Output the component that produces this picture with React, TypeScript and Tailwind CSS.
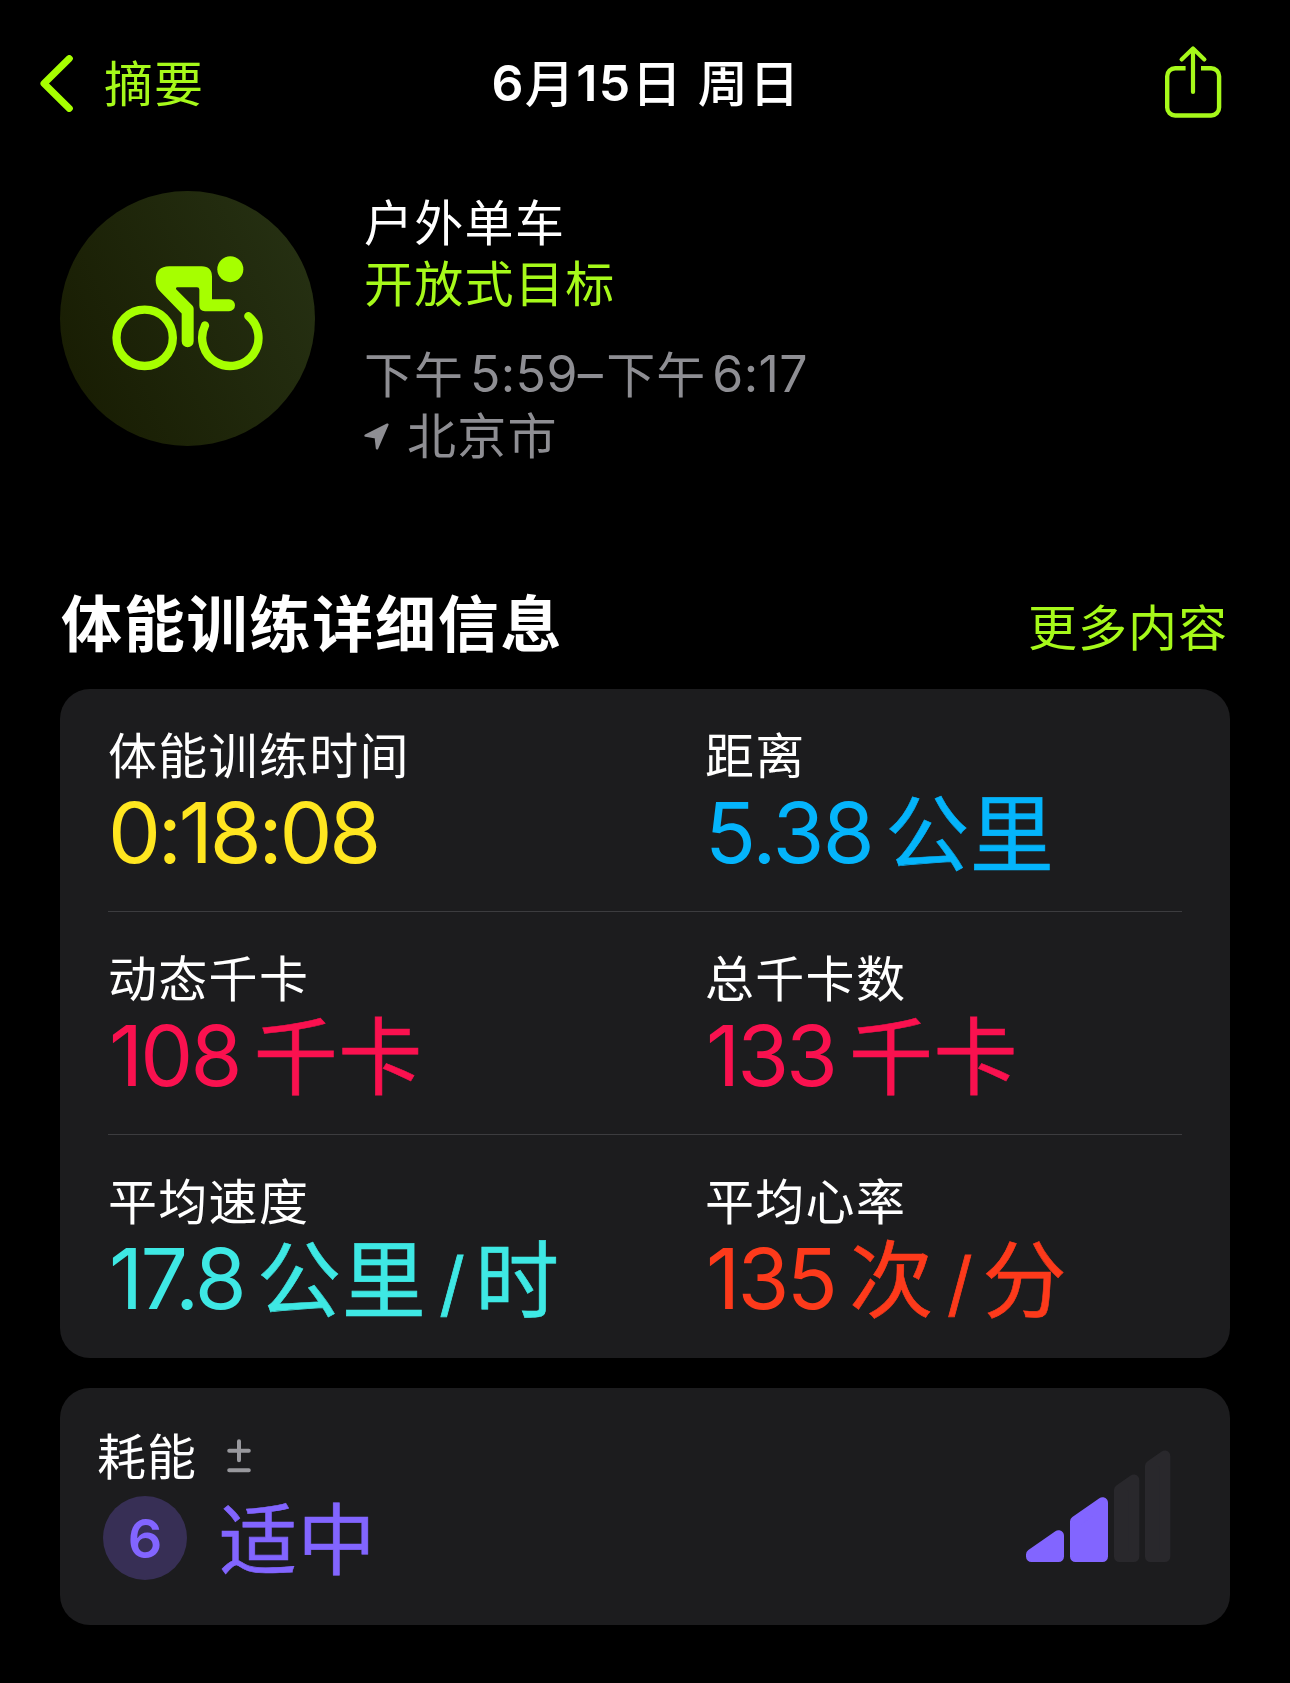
import { ReactNode } from "react";

type Metric = {
  label: string;
  color: string;
  value: ReactNode;
};

const Num = ({ children, className = "" }: { children: ReactNode; className?: string }) => (
  <span className={className}>{children}</span>
);

// slight stroke so the units carry the same weight as the digits
const Unit = ({ children, className = "" }: { children: ReactNode; className?: string }) => (
  <span className={`align-[-1.5px] text-[84px] leading-none tracking-[0.6px] [-webkit-text-stroke:0.6px] ${className}`}>
    {children}
  </span>
);

const Slash = () => (
  <span className="mr-[10px] ml-[13px] text-[71px] leading-none [-webkit-text-stroke:0.8px]">/</span>
);

const rows: Metric[][] = [
  [
    { label: "体能训练时间", color: "text-[#ffe620]", value: <Num className="tracking-[-3.2px]">0:18:08</Num> },
    {
      label: "距离",
      color: "text-[#04b4fb]",
      value: (
        <>
          <Num className="tracking-[-1.6px]">5.38</Num>
          <Unit className="ml-[12px]">公里</Unit>
        </>
      ),
    },
  ],
  [
    {
      label: "动态千卡",
      color: "text-[#fa114f]",
      value: (
        <>
          <Num className="ml-[1px] tracking-[-2.8px]">108</Num>
          <Unit className="ml-[14px]">千卡</Unit>
        </>
      ),
    },
    {
      label: "总千卡数",
      color: "text-[#fa114f]",
      value: (
        <>
          <Num className="ml-[1px] tracking-[-3px]">133</Num>
          <Unit className="ml-[14px]">千卡</Unit>
        </>
      ),
    },
  ],
  [
    {
      label: "平均速度",
      color: "text-[#3ee8e4]",
      value: (
        <>
          <Num className="ml-[1px] tracking-[-2.6px]">17.8</Num>
          <Unit className="ml-[13px]">公里</Unit>
          <Slash />
          <Unit>时</Unit>
        </>
      ),
    },
    {
      label: "平均心率",
      color: "text-[#fd3a1b]",
      value: (
        <>
          <Num className="ml-[1px] tracking-[-2.6px]">135</Num>
          <Unit className="ml-[14px]">次</Unit>
          <Slash />
          <Unit>分</Unit>
        </>
      ),
    },
  ],
];

const BackIcon = () => (
  <svg width="33" height="57" viewBox="0 0 33 57" fill="none">
    <path d="M29.3 3.6 4 28.5 29.3 53.4" stroke="#a6ff00" strokeWidth="7" strokeLinecap="round" strokeLinejoin="round" />
  </svg>
);

const ShareIcon = () => (
  <svg width="58" height="74" viewBox="0 0 58 74" fill="none" stroke="#a6f91a" strokeWidth="4.4" strokeLinejoin="round">
    <path d="M21.6 23.2H11.2a8 8 0 0 0-8 8v31.3a8 8 0 0 0 8 8h35.9a8 8 0 0 0 8-8V31.2a8 8 0 0 0-8-8H37" />
    <path d="M29 3.5V47M17.6 14.4 29 3.5l11.4 10.9" strokeLinecap="round" strokeWidth="4.2" />
  </svg>
);

const CyclingIcon = () => (
  <svg width="255" height="255" viewBox="30 32.5 765 765" fill="#a6ff00">
    <circle cx="541" cy="267" r="39" />
    <path d="M358 258H455Q486 258 486 290V357H537A18 18 0 0 1 537 393H465Q448 393 448 376V328Q448 321 441 321H382Q376 322 379 328L427 376Q431 380 431 386V483A18 18 0 0 1 395 483V400L330 333Q317 320 317 300Q317 258 358 258Z" />
    <g fill="none" stroke="#a6ff00" strokeWidth="25" strokeLinecap="round">
      <circle cx="284" cy="473" r="84.5" />
      <path d="M465 436A84.5 84.5 0 1 0 595 408" />
    </g>
  </svg>
);

const LocationIcon = () => (
  <svg width="25" height="27" viewBox="0 0 25 27" fill="#8e8e93" stroke="#8e8e93" strokeWidth="2.4" strokeLinejoin="round">
    <path d="M23.4 1.6 1.6 12.6l10.2 1.8L13 25.4Z" />
  </svg>
);

const PlusMinusIcon = () => (
  <svg width="24" height="34" viewBox="0 0 24 34" fill="none" stroke="#98989d" strokeWidth="4" strokeLinecap="round">
    <path d="M12 2.2v19M2.2 11.7h19.6M2.2 31.2h19.6" />
  </svg>
);

const EffortBars = () => (
  <svg width="145" height="112" viewBox="0 0 145 112" strokeWidth="11" strokeLinejoin="round">
    <g fill="#8265ff" stroke="#8265ff">
      <path d="M5.5 104.5 32.5 85.7V106.5H5.5Z" />
      <path d="M49.5 71.5 76.5 52.7V106.5H49.5Z" />
    </g>
    <g fill="#29282c" stroke="#29282c">
      <path d="M93.5 40 107.8 30V106.5H93.5Z" />
      <path d="M124.5 16 138.8 6V106.5H124.5Z" />
    </g>
  </svg>
);

const App = () => {
  return (
    <div className="h-[1683px] w-[1290px] overflow-hidden bg-black font-['Inter','Noto_Sans_CJK_SC',sans-serif] text-white">
      <header className="grid h-[166px] grid-cols-[1fr_auto_1fr] items-center px-[40px]">
        <button className="flex items-center gap-[31px] text-[49px] leading-[60px] tracking-[1px] text-[#a6f91a]">
          <BackIcon />
          <span className="pt-[3px]">摘要</span>
        </button>
        <h1 className="pt-[1px] pl-[2px] text-[50px] leading-[60px] font-semibold tracking-[1.4px]">
          6<span className="align-[-1px] font-medium">月</span>15
          <span className="align-[-1px] font-medium">日 周日</span>
        </h1>
        <button className="-mt-[3px] mr-[28px] justify-self-end">
          <ShareIcon />
        </button>
      </header>

      <section className="flex h-[301px] px-[60px] pt-[25px]">
        <div className="size-[255px] rounded-full bg-[linear-gradient(65deg,#171b01,#273214)]">
          <CyclingIcon />
        </div>
        <div className="ml-[49px] pt-[2px] text-[49px] leading-[61px] tracking-[1.3px]">
          <p>户外单车</p>
          <p className="text-[#a6f91a]">开放式目标</p>
          <p className="mt-[29px] h-[62px] tracking-[0.4px] text-[#8e8e93]">
            <span className="align-[-1px] tracking-[1px]">下午</span>
            <span className="mr-[3px] ml-[6px] text-[50px]">5:59–</span>
            <span className="align-[-1px] tracking-[1px]">下午</span>
            <span className="ml-[6px] text-[50px]">6:17</span>
          </p>
          <p className="flex items-center gap-[18px] text-[#8e8e93]">
            <LocationIcon />
            北京市
          </p>
        </div>
      </section>

      <section className="px-[60px] pt-[121px]">
        <div className="flex h-[101px] items-start justify-between">
          <h2 className="ml-[1px] text-[61px] leading-[74px] font-bold tracking-[1.8px]">体能训练详细信息</h2>
          <button className="mt-[10px] mr-[2px] text-[49px] leading-[62px] tracking-[1px] text-[#a6f91a]">更多内容</button>
        </div>

        <div className="rounded-[30px] bg-[#1c1c1e] px-[48px]">
          {rows.map((row, i) => (
            <div
              key={i}
              className="grid h-[223px] grid-cols-[597px_1fr] border-b border-[#3c3c3f] pt-[38px] whitespace-nowrap last:border-transparent"
            >
              {row.map((metric) => (
                <div key={metric.label}>
                  <p className="text-[49px] leading-[60px] tracking-[1.3px]">{metric.label}</p>
                  <p className={`-mt-[2px] text-[84px] leading-[96px] ${metric.color}`}>{metric.value}</p>
                </div>
              ))}
            </div>
          ))}
        </div>

        <div className="mt-[30px] flex h-[237px] items-start justify-between rounded-[30px] bg-[#1c1c1e] pr-[59px] pl-[37px]">
          <div className="pt-[38px]">
            <div className="flex h-[60px] items-center gap-[30px]">
              <p className="pt-[3px] text-[49px] leading-[60px] tracking-[1px]">耗能</p>
              <PlusMinusIcon />
            </div>
            <div className="mt-[10px] ml-[6px] flex items-center gap-[32px]">
              <span className="flex size-[84px] items-center justify-center rounded-full bg-[#372f55] pt-[2px] text-[54px] leading-none font-semibold text-[#8265ff]">
                6
              </span>
              <p className="mt-[3px] -mb-[3px] text-[78px] leading-[84px] tracking-[0.6px] text-[#8265ff] [-webkit-text-stroke:0.6px]">
                适中
              </p>
            </div>
          </div>
          <div className="pt-[62px]">
            <EffortBars />
          </div>
        </div>
      </section>
    </div>
  );
};

export default App;
